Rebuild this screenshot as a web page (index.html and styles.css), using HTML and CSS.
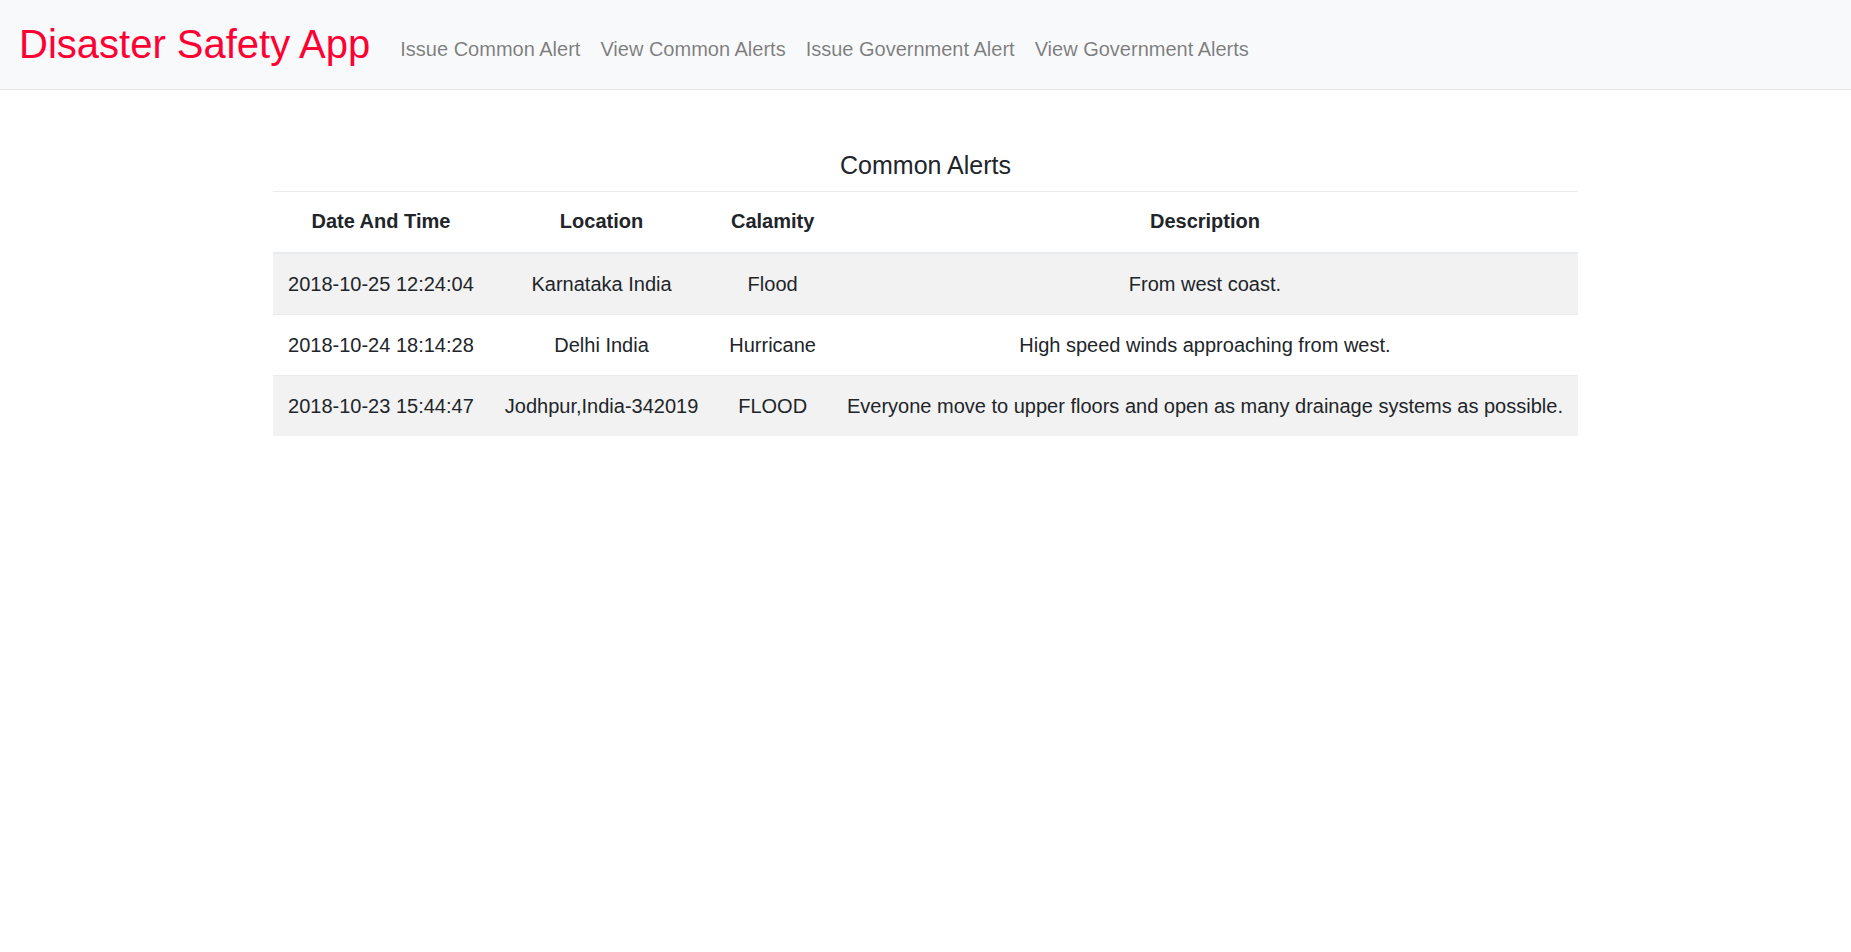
FILE: index.html
```html
<!DOCTYPE html>
<html lang="en">
<head>
<meta charset="utf-8">
<title>Disaster Safety App</title>
<link rel="stylesheet" href="styles.css">
</head>
<body>
<nav class="navbar">
  <a class="brand" href="#">Disaster Safety App</a>
  <ul class="nav">
    <li><a class="nav-link" href="#">Issue Common Alert</a></li>
    <li><a class="nav-link" href="#">View Common Alerts</a></li>
    <li><a class="nav-link" href="#">Issue Government Alert</a></li>
    <li><a class="nav-link" href="#">View Government Alerts</a></li>
  </ul>
</nav>
<main class="content">
  <div class="table-title">Common Alerts</div>
  <table class="alerts">
    <thead>
      <tr><th>Date And Time</th><th>Location</th><th>Calamity</th><th>Description</th></tr>
    </thead>
    <tbody>
      <tr><td>2018-10-25 12:24:04</td><td>Karnataka India</td><td>Flood</td><td>From west coast.</td></tr>
      <tr><td>2018-10-24 18:14:28</td><td>Delhi India</td><td>Hurricane</td><td>High speed winds approaching from west.</td></tr>
      <tr><td>2018-10-23 15:44:47</td><td>Jodhpur,India-342019</td><td>FLOOD</td><td>Everyone move to upper floors and open as many drainage systems as possible.</td></tr>
    </tbody>
  </table>
</main>
</body>
</html>
```
FILE: styles.css
```css
html, body {
  margin: 0;
  padding: 0;
}
body {
  font-family: "Liberation Sans", Arial, sans-serif;
  font-size: 20px;
  line-height: 1.5;
  color: #212529;
  background: #fff;
}
.navbar {
  display: flex;
  align-items: center;
  height: 89px;
  padding: 0 20px 0 19px;
  background: #f8f9fa;
  border-bottom: 1px solid #e6e7e8;
}
.brand {
  font-size: 40px;
  line-height: 1.5;
  color: #ff0033;
  text-decoration: none;
  margin-right: 20px;
  margin-top: -2px;
}
.nav {
  display: flex;
  list-style: none;
  margin: 0;
  padding: 0;
  margin-top: 8px;
}
.nav-link {
  display: block;
  padding: 0 10px;
  color: rgba(0, 0, 0, 0.5);
  text-decoration: none;
  font-size: 20px;
}
.content {
  padding-top: 60px;
}
.table-title {
  text-align: center;
  font-size: 25px;
  line-height: 30px;
  margin-bottom: 11px;
}
.alerts {
  margin: 0 auto;
  border-collapse: collapse;
}
.alerts th,
.alerts td {
  padding: 15px 15.5px;
  text-align: center;
  line-height: 30px;
  border-top: 1px solid #e9ecef;
  white-space: nowrap;
}
.alerts th {
  font-weight: bold;
  padding-top: 14px;
  padding-bottom: 16px;
  border-bottom: 2px solid #e9ecef;
}
.alerts tbody tr:nth-child(odd) {
  background: #f2f2f2;
}
```
